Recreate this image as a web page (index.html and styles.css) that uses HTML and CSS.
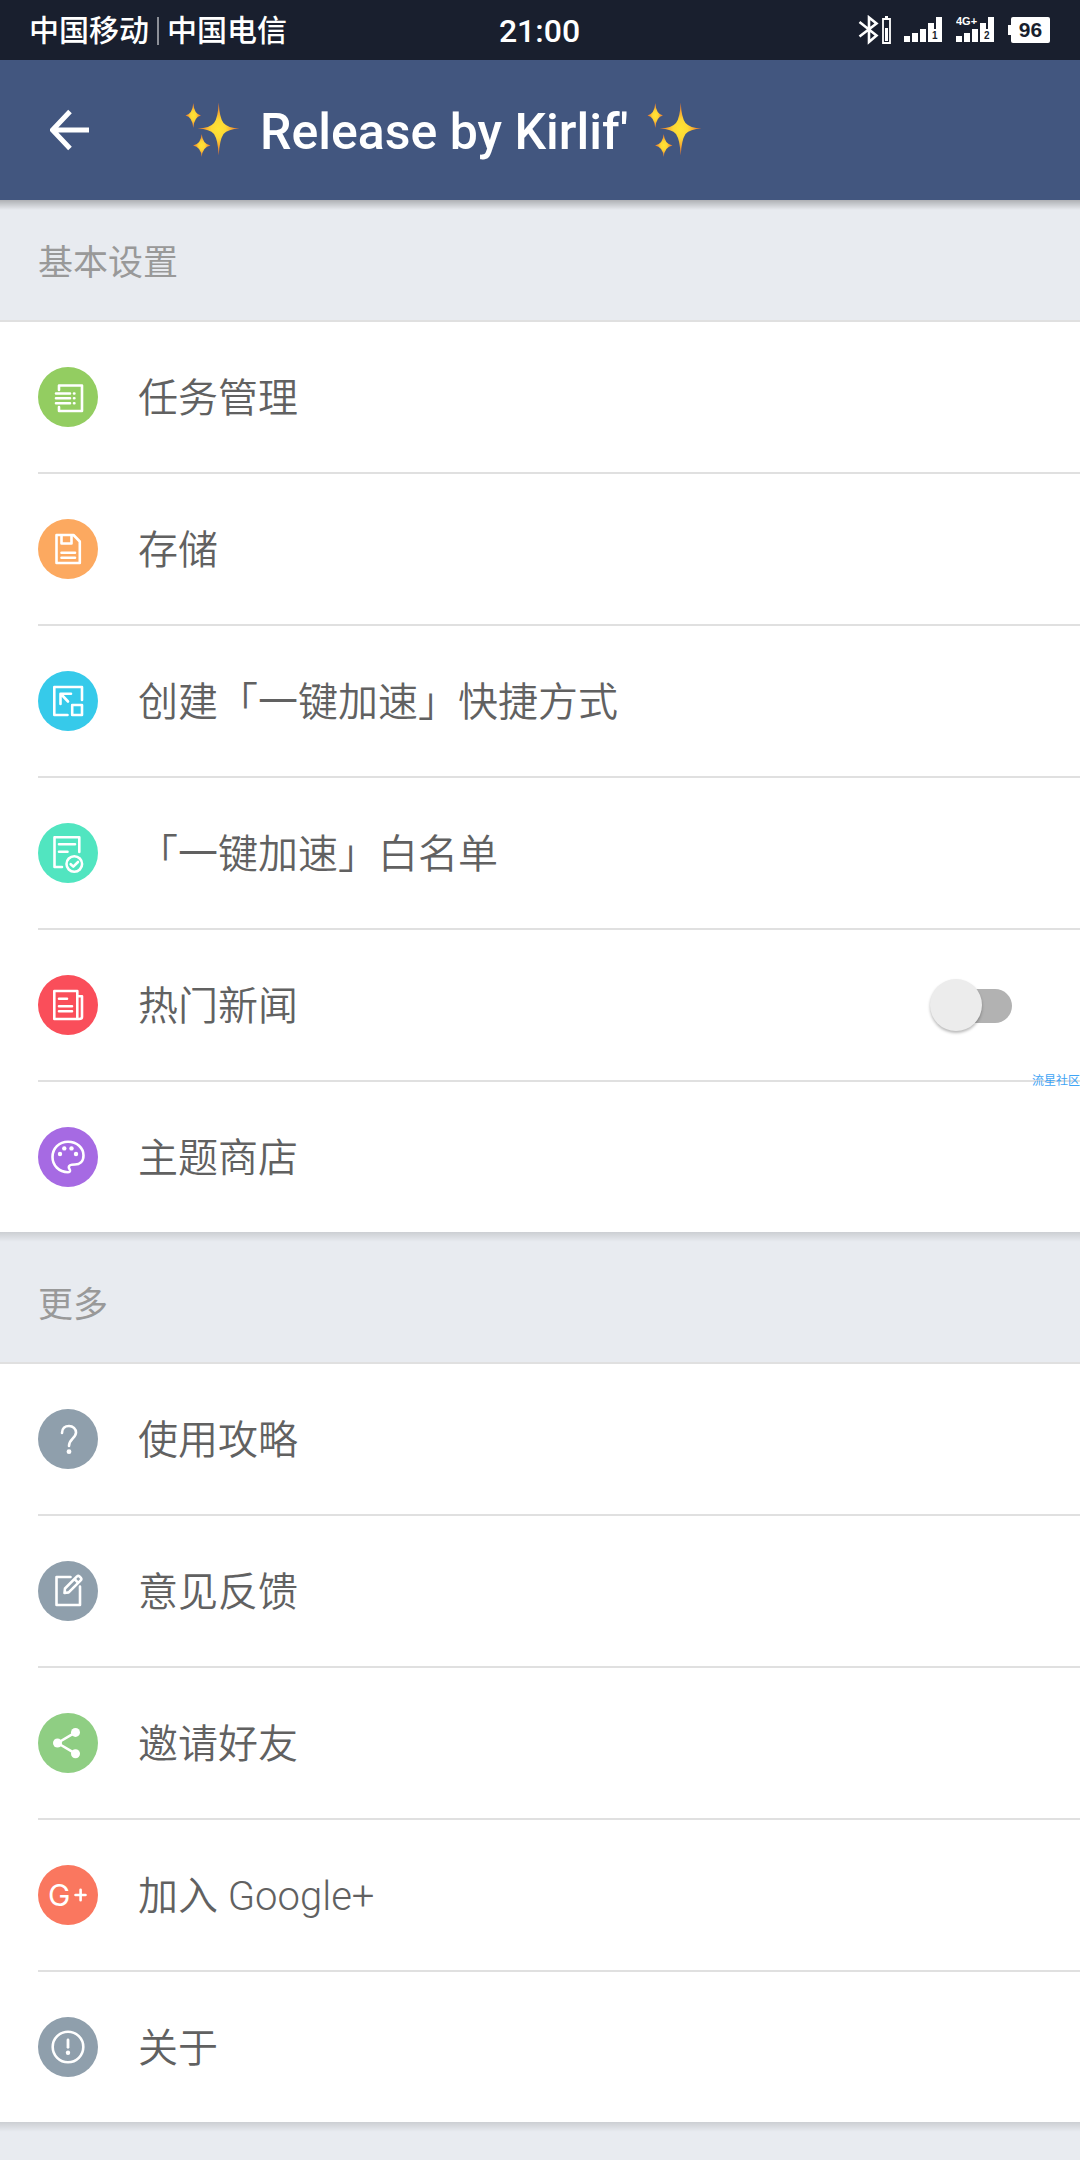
FILE: index.html
```html
<!DOCTYPE html>
<html lang="zh-CN">
<head>
    <meta charset="utf-8">
    <meta name="viewport" content="width=device-width, initial-scale=1">
    <title>设置</title>
    <link rel="stylesheet" href="styles.css">
</head>
<body>
    <!-- shared shapes -->
    <svg class="defs" aria-hidden="true">
        <defs>
            <radialGradient id="gold">
                <stop offset="0" stop-color="#ffe433"/>
                <stop offset="0.35" stop-color="#fdd835"/>
                <stop offset="1" stop-color="#ee6c2c"/>
            </radialGradient>
            <symbol id="sparkles" viewBox="0 0 62 62">
                <path fill="url(#gold)" d="M36.700 3.500Q37.500 19 41.500 24Q46 29 57.500 29.500Q46 30 41.500 35Q37.500 41 36.700 56.500Q36 41 32 35Q28 30 15.500 29.500Q28 29 32 24Q36 19 36.700 3.500Z"/>
                <path fill="url(#gold)" d="M11.300 4Q12 15 19 16.500Q12 18 11.300 29Q10.500 18 3.500 16.500Q10.500 15 11.300 4Z"/>
                <path fill="url(#gold)" d="M19.700 35Q20.500 45 28.500 46.500Q20.500 48 19.700 58Q19 48 11 46.500Q19 45 19.700 35Z"/>
            </symbol>
            <symbol id="bars" viewBox="0 0 38 30">
                <path fill="#fff" d="M0 21h6v6H0zM8 18h6v9H8zM16 14h6v13h-6zM24 8h6v6h2V2h6v25H24z"/>
            </symbol>
        </defs>
    </svg>

    <div class="status-bar">
        <div class="carriers">
            <span>中国移动</span>
            <span class="carrier-line"></span>
            <span>中国电信</span>
        </div>
        <div class="clock">21:00</div>
        <div class="status-icons">
            <svg class="bluetooth" width="34" height="30" viewBox="0 0 34 30">
                <path d="M1.500 7L18.500 20.500L11 27V2.500L18.500 8.500L1.500 21.500" fill="none" stroke="#fff" stroke-width="2.600"/>
                <path d="M25 4h7v24h-7zM27 2h3" fill="none" stroke="#fff" stroke-width="1.800"/>
                <path d="M27 13h3v13h-3z" fill="#fff"/>
            </svg>
            <svg class="signal" width="38" height="30">
                <use href="#bars"/>
                <text class="sim" x="28" y="24">1</text>
            </svg>
            <svg class="signal" width="38" height="30">
                <use href="#bars"/>
                <text class="network" x="0" y="10">4G+</text>
                <text class="sim" x="28" y="24">2</text>
            </svg>
            <div class="battery">96</div>
        </div>
    </div>

    <header class="app-bar">
        <button class="back" type="button" aria-label="返回">
            <svg width="40" height="42" viewBox="0 0 40 42" fill="none" stroke="#fff" stroke-width="5">
                <path d="M20 2.500L2.500 21L20 39.500M4 21H39"/>
            </svg>
        </button>
        <h1 class="title">
            <svg class="sparkles"><use href="#sparkles"/></svg>
            <span>Release by Kirlif'</span>
            <svg class="sparkles"><use href="#sparkles"/></svg>
        </h1>
    </header>

    <main>
        <section>
            <h2 class="section-title">基本设置</h2>
            <ul class="list">
                <li>
                    <a class="row" href="#">
                        <svg class="icon green" viewBox="0 0 60 60">
                            <path d="M21 23V18.500H44V44H21V40M18 26.500H32M18 31.300H32M18 36.200H32"/>
                            <path d="M36 26.500h.4M36 31.300h.4M36 36.200h.4"/>
                        </svg>
                        <span>任务管理</span>
                    </a>
                </li>
                <li>
                    <a class="row" href="#">
                        <svg class="icon orange" viewBox="0 0 60 60">
                            <path d="M18.500 16H35.500L41.800 22.500V44H18.500ZM23.500 16V24.500H33.500V16M23.500 33.700H37M23.500 38.700H37"/>
                        </svg>
                        <span>存储</span>
                    </a>
                </li>
                <li>
                    <a class="row" href="#">
                        <svg class="icon blue" viewBox="0 0 60 60">
                            <path d="M44 29V16H16.300V44H29.500M34.200 34H44V44H34.200ZM33 22.700H22.500V33M23 23L30 30.500"/>
                        </svg>
                        <span>创建「一键加速」快捷方式</span>
                    </a>
                </li>
                <li>
                    <a class="row" href="#">
                        <svg class="icon teal" viewBox="0 0 60 60">
                            <path d="M41.300 29V14.300H16.500V44H24M21 21.300H37M21 28.700H29.500"/>
                            <circle cx="36.300" cy="41" r="7.800"/>
                            <path d="M32.700 41.200L35.300 43.600L40 39"/>
                        </svg>
                        <span>「一键加速」白名单</span>
                    </a>
                </li>
                <li>
                    <label class="row">
                        <svg class="icon red" viewBox="0 0 60 60">
                            <path d="M16.300 16H39.300V44H16.300ZM39.300 21.300H44V42Q44 44 41 44H39M21 23.700H29M21 31.300H34M21 36.200H34"/>
                        </svg>
                        <span>热门新闻</span>
                        <input class="switch" type="checkbox">
                    </label>
                </li>
                <li>
                    <span class="watermark">流星社区</span>
                    <a class="row" href="#">
                        <svg class="icon purple" viewBox="0 0 60 60">
                            <path d="M30 45.300C21 45 14.500 38.500 14.500 30C14.500 21.500 21 14.700 30 14.700C39 14.700 45.500 21 45.500 28.500C45.500 34.500 41.500 37.500 37 37.500C33.500 37.500 30.800 37.800 30.800 40C30.800 42 32.300 42.500 32 44Q31.700 45.300 30 45.300Z"/>
                            <g class="solid"><circle cx="22" cy="27" r="2.200"/><circle cx="26.300" cy="21.400" r="2.200"/><circle cx="33.500" cy="21.400" r="2.200"/><circle cx="38" cy="27" r="2.200"/></g>
                        </svg>
                        <span>主题商店</span>
                    </a>
                </li>
            </ul>
        </section>

        <section>
            <h2 class="section-title">更多</h2>
            <ul class="list">
                <li>
                    <a class="row" href="#">
                        <svg class="icon gray" viewBox="0 0 60 60">
                            <path d="M24 24C24 19.500 27 17 31 17C35 17 38 19.800 38 23.500C38 29 31 30 31 37"/>
                            <circle class="solid" cx="31" cy="42.700" r="2.400"/>
                        </svg>
                        <span>使用攻略</span>
                    </a>
                </li>
                <li>
                    <a class="row" href="#">
                        <svg class="icon gray" viewBox="0 0 60 60">
                            <path d="M32.500 16H18.500V44H42V25.500M26.500 32L27 27.500L39 15.400Q40.200 14.300 41.500 15.400L42.700 16.600Q44 18 42.700 19.300L30.700 31.400ZM36.500 18L40.200 21.800"/>
                        </svg>
                        <span>意见反馈</span>
                    </a>
                </li>
                <li>
                    <a class="row" href="#">
                        <svg class="icon share" viewBox="0 0 60 60">
                            <path d="M37.500 19.300L19.500 30L37.500 40.700"/>
                            <g class="solid"><circle cx="37.500" cy="19.400" r="4.500"/><circle cx="19.500" cy="30" r="4.500"/><circle cx="37.500" cy="40.700" r="4.500"/></g>
                        </svg>
                        <span>邀请好友</span>
                    </a>
                </li>
                <li>
                    <a class="row" href="#">
                        <svg class="icon coral" viewBox="0 0 60 60">
                            <text x="10" y="41">G</text>
                            <path d="M37.500 30H47.500M42.600 24.800V35.300"/>
                        </svg>
                        <span>加入 Google+</span>
                    </a>
                </li>
                <li>
                    <a class="row" href="#">
                        <svg class="icon gray" viewBox="0 0 60 60">
                            <circle cx="30" cy="30" r="15.300"/>
                            <path d="M30 23V30.300" stroke-width="2.800"/>
                            <circle class="solid" cx="30" cy="35.700" r="2.200"/>
                        </svg>
                        <span>关于</span>
                    </a>
                </li>
            </ul>
        </section>
    </main>
</body>
</html>
```

FILE: styles.css
```css
* {
    box-sizing: border-box;
}

body {
    margin: 0;
    background: #e8ebf0;
    color: #616161;
    font-family: Roboto, "Noto Sans CJK SC", sans-serif;
}

.defs {
    position: absolute;
    width: 0;
    height: 0;
}

/* status bar */
.status-bar {
    display: grid;
    grid-template-columns: 1fr auto 1fr;
    align-items: center;
    height: 60px;
    padding: 0 30px 0 29px;
    background: #191f2e;
    color: #fff;
}

.carriers {
    display: flex;
    align-items: center;
    gap: 8px;
    font-size: 30px;
    font-weight: 500;
    line-height: 40px;
}

.carriers,
.clock {
    padding-top: 2px;
}

.carrier-line {
    width: 2px;
    height: 28px;
    background: #8c8f97;
}

.clock {
    font-size: 32px;
    font-weight: 500;
    line-height: 40px;
}

.status-icons {
    display: flex;
    align-items: center;
    justify-content: flex-end;
    gap: 14px;
}

.sim {
    font: bold 10px "Liberation Sans", sans-serif;
    fill: #191f2e;
}

.network {
    font: bold 11px "Liberation Sans", sans-serif;
    fill: #fff;
}

.bluetooth {
    margin-right: -2px;
}

.battery {
    position: relative;
    width: 39px;
    margin-left: 3px;
    border-radius: 2px;
    background: #fff;
    color: #191f2e;
    font: bold 21px/26px "Liberation Sans", sans-serif;
    text-align: center;
}

.battery::before {
    content: "";
    position: absolute;
    left: -3px;
    top: 8px;
    width: 3px;
    height: 10px;
    background: #fff;
}

/* app bar */
.app-bar {
    position: relative;
    display: flex;
    align-items: center;
    height: 140px;
    padding-left: 50px;
    background: #42567f;
    color: #fff;
}

.app-bar::after,
.list::after {
    content: "";
    position: absolute;
    top: 100%;
    left: 0;
    right: 0;
    height: 10px;
    background: linear-gradient(rgba(0, 0, 0, 0.25), rgba(0, 0, 0, 0));
}

.list::after {
    background: linear-gradient(rgba(0, 0, 0, 0.12), rgba(0, 0, 0, 0));
}

.back {
    display: flex;
    width: 132px;
    padding: 0;
    border: 0;
    background: none;
    cursor: pointer;
}

.title {
    display: flex;
    align-items: center;
    gap: 16px;
    margin: 0;
    font-size: 50px;
    font-weight: 500;
    line-height: 60px;
}

.title span {
    padding-top: 4px;
}

.sparkles {
    width: 62px;
    height: 62px;
}

/* settings list */
main {
    padding-bottom: 38px;
}

.section-title {
    margin: 0;
    padding: 40px 38px 32px;
    border-bottom: 2px solid #e0e0e0;
    color: #999;
    font-size: 35px;
    font-weight: 400;
    line-height: 48px;
}

section + section {
    padding-top: 10px;
}

.list {
    position: relative;
    margin: 0;
    padding: 0 0 0 38px;
    background: #fff;
    list-style: none;
}

.list li {
    position: relative;
}

.list li + li {
    border-top: 2px solid #e0e0e0;
}

.row {
    display: flex;
    align-items: center;
    gap: 40px;
    height: 150px;
    padding-right: 68px;
    color: inherit;
    font-size: 40px;
    font-weight: 350;
    line-height: 56px;
    text-decoration: none;
}

.row span {
    padding-top: 4px;
}

.icon {
    width: 60px;
    height: 60px;
    border-radius: 50%;
    fill: none;
    stroke: #fff;
    stroke-width: 2.6;
    stroke-linecap: round;
    stroke-linejoin: round;
}

.icon .solid {
    fill: #fff;
    stroke: none;
}

.icon text {
    font: 400 30px Inter, sans-serif;
    fill: #fff;
    stroke: none;
}

.green { background: #93cd61; }
.orange { background: #fca960; }
.blue { background: #36caea; }
.teal { background: #51e5c0; }
.red { background: #fa4e5a; }
.purple { background: #a66ae3; }
.gray { background: #8f9fac; }
.share { background: #8fce83; }
.coral { background: #fa775f; }

.switch {
    appearance: none;
    position: relative;
    width: 72px;
    height: 34px;
    margin: 2px 0 0 auto;
    border-radius: 17px;
    background: #b2b2b2;
    cursor: pointer;
}

.switch::before {
    content: "";
    position: absolute;
    left: -10px;
    top: -10px;
    width: 52px;
    height: 52px;
    border-radius: 50%;
    background: #ececec;
    box-shadow: 0 2px 3px rgba(0, 0, 0, 0.28);
}

.switch:checked::before {
    left: 30px;
}

.watermark {
    position: absolute;
    top: -10px;
    right: 0;
    color: #3fa4f5;
    font-size: 12px;
    line-height: 18px;
}
```
